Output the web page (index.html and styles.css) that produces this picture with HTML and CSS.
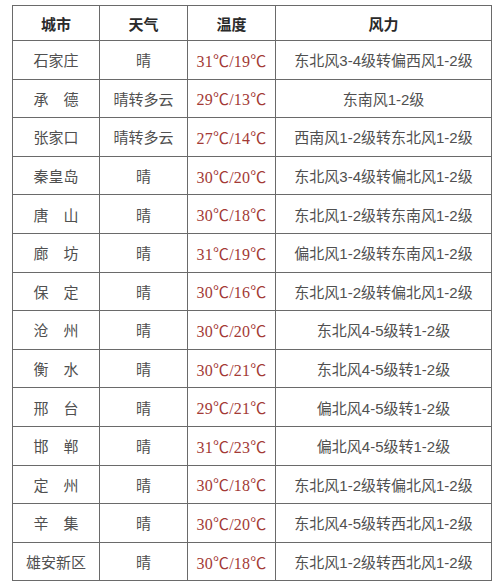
FILE: index.html
```html
<!DOCTYPE html>
<html lang="zh">
<head>
<meta charset="utf-8">
<link rel="stylesheet" href="styles.css">
</head>
<body>
<table class="wx">
<colgroup>
<col class="c1"><col class="c2"><col class="c3"><col class="c4">
</colgroup>
<thead>
<tr class="head"><th>城市</th><th>天气</th><th>温度</th><th>风力</th></tr>
</thead>
<tbody>
<tr><td>石家庄</td><td>晴</td><td class="t">31℃/19℃</td><td>东北风3-4级转偏西风1-2级</td></tr>
<tr><td>承　德</td><td>晴转多云</td><td class="t">29℃/13℃</td><td>东南风1-2级</td></tr>
<tr><td>张家口</td><td>晴转多云</td><td class="t">27℃/14℃</td><td>西南风1-2级转东北风1-2级</td></tr>
<tr><td>秦皇岛</td><td>晴</td><td class="t">30℃/20℃</td><td>东北风3-4级转偏北风1-2级</td></tr>
<tr><td>唐　山</td><td>晴</td><td class="t">30℃/18℃</td><td>东北风1-2级转东南风1-2级</td></tr>
<tr><td>廊　坊</td><td>晴</td><td class="t">31℃/19℃</td><td>偏北风1-2级转东南风1-2级</td></tr>
<tr><td>保　定</td><td>晴</td><td class="t">30℃/16℃</td><td>东北风1-2级转偏北风1-2级</td></tr>
<tr><td>沧　州</td><td>晴</td><td class="t">30℃/20℃</td><td>东北风4-5级转1-2级</td></tr>
<tr><td>衡　水</td><td>晴</td><td class="t">30℃/21℃</td><td>东北风4-5级转1-2级</td></tr>
<tr><td>邢　台</td><td>晴</td><td class="t">29℃/21℃</td><td>偏北风4-5级转1-2级</td></tr>
<tr><td>邯　郸</td><td>晴</td><td class="t">31℃/23℃</td><td>偏北风4-5级转1-2级</td></tr>
<tr><td>定　州</td><td>晴</td><td class="t">30℃/18℃</td><td>东北风1-2级转偏北风1-2级</td></tr>
<tr><td>辛　集</td><td>晴</td><td class="t">30℃/20℃</td><td>东北风4-5级转西北风1-2级</td></tr>
<tr><td>雄安新区</td><td>晴</td><td class="t">30℃/18℃</td><td>东北风1-2级转西北风1-2级</td></tr>
</tbody>
</table>
</body>
</html>
```
FILE: styles.css
```css
html, body {
  margin: 0;
  padding: 0;
  background: #fff;
}
body {
  padding: 5px 0 0 12px;
  font-family: "Liberation Sans", "Noto Sans CJK SC", sans-serif;
  color: #505050;
}
.wx {
  border-collapse: collapse;
  table-layout: fixed;
  width: 479px;
  font-size: 15px;
}
.c1 { width: 87px; }
.c2 { width: 88px; }
.c3 { width: 88px; }
.c4 { width: 216px; }
.wx th, .wx td {
  border: 1px solid #6a6a6a;
  text-align: center;
  vertical-align: middle;
  padding: 0;
  white-space: nowrap;
}
.head th {
  height: 34px;
  font-weight: bold;
  color: #2a2a2a;
}
.wx tbody td {
  height: 37.6px;
}
.wx .t {
  font-family: "Liberation Serif", "Noto Sans CJK SC", serif;
  font-size: 16px;
  color: #a33a36;
  letter-spacing: 0.2px;
}
```
